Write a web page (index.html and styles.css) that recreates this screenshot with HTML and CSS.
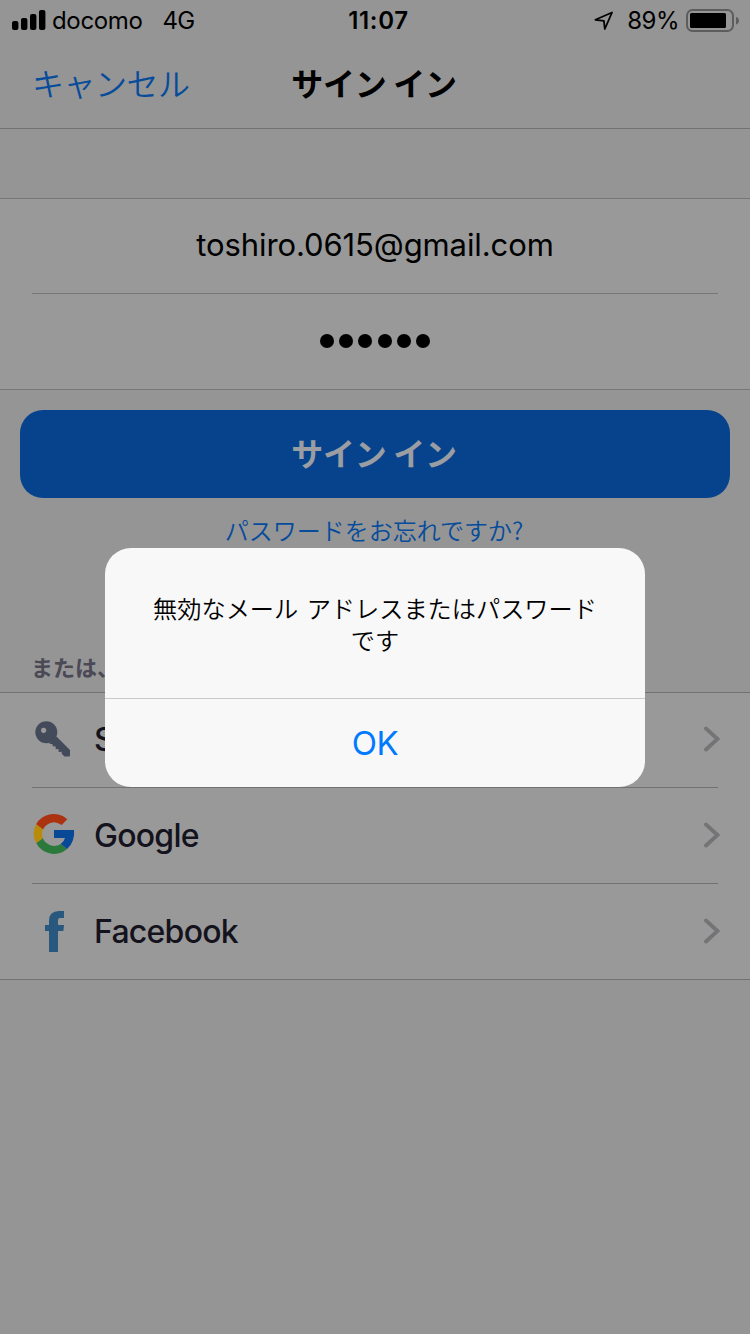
FILE: index.html
```html
<!DOCTYPE html>
<html lang="ja">
<head>
<meta charset="utf-8">
<title>サイン イン</title>
<link rel="stylesheet" href="styles.css">
</head>
<body>
<main class="screen">
  <div class="status">
    <div class="status-left">
      <svg class="signal" width="34" height="20" viewBox="0 0 34 20"><rect x="0" y="11" width="6.4" height="9" rx="2"/><rect x="9" y="8" width="6.4" height="12" rx="2"/><rect x="18" y="4" width="6.4" height="16" rx="2"/><rect x="27" y="0" width="6.4" height="20" rx="2"/></svg>
      <span class="carrier">docomo</span><span class="network">4G</span>
    </div>
    <span class="clock">11:07</span>
    <div class="status-right">
      <svg class="location" width="20" height="20" viewBox="0 0 20 20"><path d="M1.4 8.800 18 1.500 10.800 18 9.900 9.800Z" fill="none" stroke="#000" stroke-width="1.800" stroke-linejoin="round"/></svg>
      <span class="percent">89%</span>
      <svg class="battery" width="53" height="24" viewBox="0 0 53 24"><rect x="1" y="1" width="46" height="21" rx="5.5" fill="none" stroke="#5d5d5d" stroke-width="2"/><rect x="4" y="4" width="36" height="15" rx="1.5"/><path d="M50 8q3 1 3 3.800t-3 3.800z" fill="#5d5d5d"/></svg>
    </div>
  </div>
  <header class="nav">
    <a class="cancel">キャンセル</a>
    <h1 class="title">サイン イン</h1>
  </header>
  <section class="form">
    <div class="field"><span class="email">toshiro.0615@gmail.com</span></div>
    <div class="field password"><i class="dot"></i><i class="dot"></i><i class="dot"></i><i class="dot"></i><i class="dot"></i><i class="dot"></i></div>
  </section>
  <button class="submit">サイン イン</button>
  <a class="forgot">パスワードをお忘れですか?</a>
  <h2 class="label">または、</h2>
  <section class="list">
    <div class="row">
      <svg class="icon" width="42" height="42" viewBox="0 0 42 42"><circle cx="13.300" cy="14.300" r="11" fill="#434b5b"/><path fill="#434b5b" d="M23.500 18.500 37 32v6l-1 .6h-4.500l-2.800-2.800v-2l-3 .2-.2-3-2.800.3-.2-3-2.700.2-.2-2.300-3.600-.4z"/><circle cx="10.600" cy="12.300" r="2.600" fill="#999"/></svg>
      <span class="name">SSO</span>
      <svg class="chevron" width="18" height="26" viewBox="0 0 18 26"><path d="M3 2.500 14.500 13 3 23.500"/></svg>
    </div>
    <div class="row">
      <svg class="icon" width="42" height="42" viewBox="0 0 42 42"><path fill="#ab330f" d="M3.100 11.300A20 20 0 0 1 34.300 6.300L28.600 12A12.100 12.100 0 0 0 10 16.500z"/><path fill="#b98b0b" d="M3.100 11.300A20 20 0 0 0 3.300 30.300L9.900 25.200A12 12 0 0 1 10 16.500z"/><path fill="#2b7a3b" d="M3.300 30.300A20 20 0 0 0 34.100 36L27.700 31A12.100 12.100 0 0 1 9.900 25.200z"/><path fill="#074997" d="M21 17h20q.7 5-1.100 10.200-1.700 5.300-5.800 8.800L27.700 31q3.400-2.200 4.300-6H21z"/></svg>
      <span class="name">Google</span>
      <svg class="chevron" width="18" height="26" viewBox="0 0 18 26"><path d="M3 2.500 14.500 13 3 23.500"/></svg>
    </div>
    <div class="row">
      <svg class="icon" width="42" height="42" viewBox="0 0 42 42"><path fill="#29587f" d="M16 42V21h-4v-6h4V11q0-10 10-10h5v7h-4q-2 0-2 2v5h6l-.6 6H25v21z"/></svg>
      <span class="name">Facebook</span>
      <svg class="chevron" width="18" height="26" viewBox="0 0 18 26"><path d="M3 2.500 14.500 13 3 23.500"/></svg>
    </div>
  </section>
  <div class="alert" role="alertdialog">
    <p class="message">無効なメール アドレスまたはパスワード<br>です</p>
    <button class="ok">OK</button>
  </div>
</main>
</body>
</html>
```
FILE: styles.css
```css
* { box-sizing: border-box; }
body { margin: 0; }
button { border: 0; padding: 0; font: inherit; }
.screen {
  position: relative;
  width: 750px;
  height: 1334px;
  overflow: hidden;
  display: flex;
  flex-direction: column;
  background: #959595;
  color: #000;
  font-family: Inter, "Noto Sans CJK JP", sans-serif;
}
.status {
  display: grid;
  grid-template-columns: 1fr auto 1fr;
  align-items: center;
  height: 40px;
  padding: 0 11px 0 12px;
  font-size: 24px;
  line-height: 38px;
}
.status span { padding-top: 2px; }
.status-left, .status-right { display: flex; align-items: center; }
.status-right { justify-content: flex-end; }
.carrier { margin-left: 6px; letter-spacing: -0.35px; }
.network { margin-left: 20px; letter-spacing: -0.7px; }
.clock { padding-left: 6px; font-weight: 600; letter-spacing: 0.7px; }
.location { margin: 2px 13px 0 0; }
.percent { margin-right: 7px; letter-spacing: -0.5px; }
.battery { margin-top: 1px; }
.nav {
  display: grid;
  grid-template-columns: 1fr auto 1fr;
  align-items: center;
  height: 89px;
  padding: 0 34px 4px;
  border-bottom: 1px solid #717171;
  font-family: "Noto Sans CJK JP", sans-serif;
  font-size: 32px;
}
.cancel { margin-left: -2px; color: #064c9b; font-weight: 350; letter-spacing: -0.5px; }
.title { margin: 0 0 0 -2px; font-size: 32px; font-weight: 700; letter-spacing: -0.3px; }
.form {
  margin-top: 69px;
  border-top: 1px solid #77777a;
  border-bottom: 1px solid #77777a;
  background: #999;
}
.field {
  display: flex;
  align-items: center;
  justify-content: center;
  height: 95px;
  margin: 0 32px;
  padding-bottom: 3px;
  font-size: 31px;
  letter-spacing: -0.1px;
}
.field:first-child { border-bottom: 1px solid #77777a; }
.password { gap: 5.4px; padding-bottom: 1px; }
.dot { width: 14px; height: 14px; border-radius: 50%; background: #000; }
.submit {
  height: 88px;
  margin: 20px 20px 0;
  padding: 0 2px 4px 0;
  border-radius: 23px;
  background: #07438c;
  color: #9a9da2;
  font: 700 32px/84px "Noto Sans CJK JP", sans-serif;
  letter-spacing: -0.3px;
}
.forgot {
  height: 64px;
  padding-right: 2px;
  color: #064c9b;
  font: 350 24px/63px "Noto Sans CJK JP", sans-serif;
  text-align: center;
}
.label {
  height: 130px;
  margin: 0;
  padding: 88px 31px 0;
  color: #4b4956;
  font: 700 22px/32px "Noto Sans CJK JP", sans-serif;
}
.list {
  border-top: 1px solid #717174;
  border-bottom: 1px solid #717174;
  background: #999;
}
.row {
  display: flex;
  align-items: center;
  height: 96px;
  margin: 0 32px;
  padding-bottom: 2px;
  border-bottom: 1px solid #717174;
}
.row:first-child { height: 95px; }
.row:last-child { height: 95px; border-bottom: 0; }
.icon { margin: -2px 0 0 1px; }
.row:first-child .icon { margin-top: 0; }
.row:last-child .icon { margin-top: 0; }
.name {
  flex: 1;
  margin-left: 19px;
  padding-top: 1px;
  color: #14131d;
  font-size: 32px;
  font-weight: 500;
  letter-spacing: -0.75px;
}
.chevron {
  margin-right: -3px;
  fill: none;
  stroke: #747477;
  stroke-width: 3.8;
  stroke-linecap: round;
}
.alert {
  position: absolute;
  left: 105px;
  top: 548px;
  width: 540px;
  height: 239px;
  display: flex;
  flex-direction: column;
  border-radius: 26px;
  overflow: hidden;
  background: #f8f8f9;
}
.message {
  height: 150px;
  margin: 0;
  padding-top: 44px;
  font: 350 24.2px/32px "Noto Sans CJK JP", sans-serif;
  word-spacing: 3px;
  text-align: center;
}
.ok {
  height: 89px;
  border-top: 1px solid #cacacc;
  background: transparent;
  color: #007aff;
  font-size: 33px;
  letter-spacing: -0.5px;
}
```
